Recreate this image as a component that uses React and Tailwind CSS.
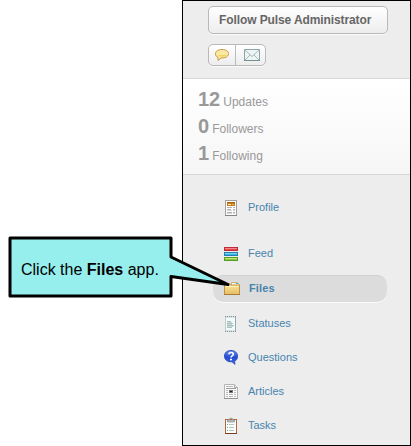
import React from "react";

function Icon({ children }) {
  return (
    <svg className="h-[18px] w-4 shrink-0" viewBox="0 0 16 18">
      {children}
    </svg>
  );
}

function ProfileIcon() {
  return (
    <Icon>
      <rect x="1.5" y="2.5" width="11" height="15" fill="#fdfdfd" stroke="#a0a0a0" />
      <path d="M1 17.5h12" stroke="#858585" />
      <rect x="3" y="4" width="8" height="4" fill="#c57a16" />
      <path d="M3 4.5h8" stroke="#a86412" />
      <path d="M4 6.5h3" stroke="#fff0cf" />
      <path d="M8 6.500h2" stroke="#e7b25f" />
      <path d="M3 9.500h5M9 9.500h2M3 11.500h4M9 11.500h2M3 14.500h5M9 14.500h2" stroke="#b2b2b2" />
      <path d="M3 12.500h5M9 12.500h2M3 15.500h5M9 15.500h2" stroke="#d8d8d8" />
    </Icon>
  );
}

function FeedIcon() {
  return (
    <Icon>
      <rect x=".5" y="3.5" width="13" height="3" fill="#e8434b" stroke="#b92e36" />
      <path d="M1 4.5h12" stroke="#f4868a" />
      <rect x=".5" y="8.5" width="13" height="3" fill="#35b5e8" stroke="#237fae" />
      <path d="M1 9.5h12" stroke="#7ed0f0" />
      <rect x=".5" y="13.5" width="13" height="3" fill="#86cf32" stroke="#5a9a26" />
      <path d="M1 14.5h12" stroke="#bae681" />
    </Icon>
  );
}

function FolderIcon() {
  return (
    <Icon>
      <defs>
        <linearGradient id="folder" x1="0" y1="0" x2="0" y2="1">
          <stop offset="0" stopColor="#fbe9a4" />
          <stop offset="1" stopColor="#e5bc62" />
        </linearGradient>
      </defs>
      <path d="M7.5 5V2.5h6L15 4v2" fill="#fff" stroke="#d6b26a" />
      <path d="M9 3.5h3" stroke="#d8f0fa" />
      <path d="M12 3.5h2" stroke="#35b5e8" />
      <path d="M.5 14.5V5q0-1.500 1.500-1.500h3.500l1 1.500h9v9.500z" fill="url(#folder)" stroke="#c19240" />
      <path d="M1.500 6.500h13" stroke="#fff2bd" />
      <path d="M0 14.500h16" stroke="#aa7c31" />
    </Icon>
  );
}

function StatusIcon() {
  return (
    <Icon>
      <path d="M1.500 3v14h10V3z" fill="#f4faf9" stroke="#bccbcb" />
      <path d="M1 2.500h11M1 17.500h11" stroke="#7f9798" strokeDasharray="1 1" />
      <path d="M11.500 3v14" stroke="#94aaab" />
      <path d="M3 7.500h4M3 9.500h6M3 11.500h7M3 13.500h5" stroke="#a9c2c0" />
      <path d="M3 8.500h5M3 10.500h5M3 12.500h6" stroke="#c6d8d6" />
    </Icon>
  );
}

function QuestionIcon() {
  return (
    <Icon>
      <defs>
        <linearGradient id="question" x1="0" y1="0" x2="0" y2="1">
          <stop offset="0" stopColor="#6691ee" />
          <stop offset=".5" stopColor="#244bd2" />
          <stop offset="1" stopColor="#3e70e5" />
        </linearGradient>
      </defs>
      <path d="M7 2.500c4 0 6.500 2.300 6.500 5.700 0 2.500-1.200 4.300-3 5.100l.5 3-3-2.500c-4.500.3-7.500-2-7.500-5.600S3.100 2.500 7 2.500z" fill="url(#question)" stroke="#3451b8" />
      <path d="M4.800 6.300Q5 4.500 7.100 4.500q2.200 0 2.200 1.700 0 1-1.200 1.700Q7 8.500 7 9.500" fill="none" stroke="#fff" strokeWidth="1.600" />
      <path d="M6 11.500h2" stroke="#fff" strokeWidth="1.600" />
    </Icon>
  );
}

function ArticleIcon() {
  return (
    <Icon>
      <path d="M.5 2.500h10l3 3v11H.5z" fill="#fbfbfb" stroke="#b4b4b4" />
      <path d="M10.500 2.500v3h3" fill="#e7e7e7" stroke="#aaa" />
      <path d="M2 4.500h7M2 8.500h2M2 10.500h2M10 8.500h2M10 10.500h2M2 12.500h2M5 12.500h4M10 12.500h2M2 14.500h2M5 14.500h4M10 14.500h2" stroke="#b8b8b8" />
      <path d="M2 6.500h10" stroke="#9a9a9a" />
      <rect x="5" y="8" width="4" height="3" fill="#777" />
      <path d="M6 9h2v1H6z" fill="#222" />
      <path d="M0 16.500h14" stroke="#929292" />
    </Icon>
  );
}

function TaskIcon() {
  return (
    <Icon>
      <rect x="1.500" y="3.500" width="11" height="14" fill="#fafcfb" stroke="#b0653d" />
      <path d="M1 17.500h12" stroke="#7d3b21" />
      <path d="M3.500 6V4H5q.3-2 2-2t2 2h1.500v2z" fill="#b4b9b9" stroke="#8d9090" strokeWidth=".7" />
      <path d="M6 3.500h2" stroke="#b0653d" />
      <path d="M3 8.500h1M3 11.500h1M3 14.500h1" stroke="#63aa90" />
      <path d="M5 8.500h5M5 11.500h5M5 14.500h5" stroke="#b2c5c1" />
    </Icon>
  );
}

function NavItem({ icon, label }) {
  return (
    <a className="flex h-[34px] items-center pl-[41px]">
      {icon}
      <span className="ml-2 text-[11px] leading-[14px]">{label}</span>
    </a>
  );
}

function Stat({ value, label }) {
  return (
    <div className="flex h-[27px] items-baseline gap-[3px]">
      <b className="text-[20px] leading-[27px]">{value}</b>
      <span className="text-[12px]">{label}</span>
    </div>
  );
}

function Callout() {
  return (
    <div className="absolute left-0 top-[230px] h-[75px] w-[240px]">
      <svg className="block h-[75px] w-[240px]" viewBox="0 0 240 75">
        <path d="M10 8H171V27L228 54.500L171 46.500V66H10Z" fill="#96efed" stroke="#000" strokeWidth="3" strokeLinejoin="round" />
      </svg>
      <p className="absolute left-[21px] top-[30px] whitespace-nowrap text-[16px] leading-[20px] text-black">
        Click the <b>Files</b> app.
      </p>
    </div>
  );
}

export default function App() {
  return (
    <div className="relative flex h-[446px] w-[411px] justify-end overflow-hidden bg-white font-['Liberation_Sans',Arial,sans-serif]">
      <aside className="flex w-[229px] flex-col border border-black bg-[#ededed]">
        <div className="h-[77px] pl-[25px] pt-[5px]">
          <button className="flex h-[28px] w-[180px] items-center rounded-[5px] border border-[#b9b9b9] bg-linear-to-b from-white to-[#ededed] pl-[10px] text-[12px] font-bold tracking-[-0.1px] text-[#666] shadow-[0_1px_0_#fafafa]">
            Follow Pulse Administrator
          </button>
          <div className="mt-[10px] flex h-[22px] w-[58px] rounded-[5px] border border-[#b9b9b9] bg-linear-to-b from-white to-[#ededed] shadow-[0_1px_0_#fafafa]">
            <button className="flex w-[27px] items-center justify-center border-r border-[#bbb]">
              <svg className="h-[14px] w-4" viewBox="0 0 16 14">
                <path d="M8 1.500c4 0 6.500 1.700 6.500 4.200S12 10 8 10H7l-3 2.500V9.500C2.400 8.700 1.500 7.400 1.500 5.800 1.500 3.200 4 1.500 8 1.500z" fill="#fae9a2" stroke="#c99645" />
                <path d="M4 7h9q-1 1.800-5 1.800Q4.700 8.800 4 7z" fill="#efd45c" />
              </svg>
            </button>
            <button className="flex flex-1 items-center justify-center pl-[3px]">
              <svg className="h-3 w-4" viewBox="0 0 16 12">
                <path d="M.5.500h15v11H.5z" fill="#edf4f3" stroke="#8ba7a7" />
                <path d="M1 1l7 6.500L15 1M1 11l5-5M15 11l-5-5" fill="none" stroke="#a0b8b8" />
                <path d="M0 11.500h16" stroke="#738f91" />
              </svg>
            </button>
          </div>
        </div>
        <section className="h-[97px] border-y border-[#d7d7d7] bg-linear-to-b from-white to-[#f6f6f6] pl-[15px] pt-[7px] text-[#999]">
          <Stat value="12" label="Updates" />
          <Stat value="0" label="Followers" />
          <Stat value="1" label="Following" />
        </section>
        <nav className="pt-[15px] text-[#4784ad]">
          <NavItem icon={<ProfileIcon />} label="Profile" />
          <div className="pt-3">
            <NavItem icon={<FeedIcon />} label="Feed" />
          </div>
          <a className="mb-1 ml-[30px] mt-[5px] flex h-[27px] w-[174px] items-start rounded-[10px] border-t border-[#d0d0d0] bg-[#dcdcdc] pl-[11px] pt-1 shadow-[0_1px_0_#fafafa]">
            <FolderIcon />
            <span className="ml-[9px] mt-[1px] text-[11px] font-bold leading-[14px] tracking-[0.15px]">Files</span>
          </a>
          <NavItem icon={<StatusIcon />} label="Statuses" />
          <NavItem icon={<QuestionIcon />} label="Questions" />
          <NavItem icon={<ArticleIcon />} label="Articles" />
          <NavItem icon={<TaskIcon />} label="Tasks" />
        </nav>
      </aside>
      <Callout />
    </div>
  );
}
